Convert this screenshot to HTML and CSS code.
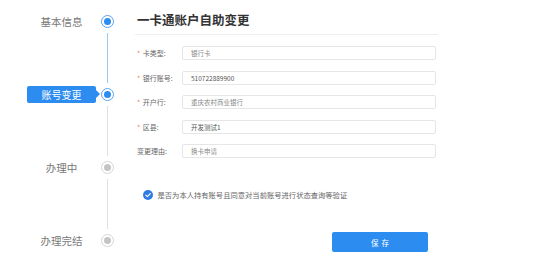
FILE: index.html
```html
<!DOCTYPE html>
<html lang="zh-CN">
<head>
    <meta charset="utf-8">
    <title>一卡通账户自助变更</title>
    <link rel="stylesheet" href="styles.css">
</head>
<body>

<div class="page">
    <div class="steps">
        <div class="step done">
            <span class="step-name">基本信息</span>
            <span class="arrow"></span>
            <span class="dot"></span>
        </div>
        <div class="link active"><span></span></div>
        <div class="step current">
            <span class="step-name">账号变更</span>
            <span class="arrow"></span>
            <span class="dot"></span>
        </div>
        <div class="link"><span></span></div>
        <div class="step">
            <span class="step-name">办理中</span>
            <span class="arrow"></span>
            <span class="dot"></span>
        </div>
        <div class="link"><span></span></div>
        <div class="step">
            <span class="step-name">办理完结</span>
            <span class="arrow"></span>
            <span class="dot"></span>
        </div>
    </div>

    <div class="form">
        <h1>一卡通账户自助变更</h1>

        <div class="fields">
            <div class="field">
                <label><span class="req">*</span>卡类型:</label>
                <input type="text" class="light" value="银行卡" readonly>
            </div>
            <div class="field">
                <label><span class="req">*</span>银行账号:</label>
                <input type="text" value="510722889900" readonly>
            </div>
            <div class="field">
                <label><span class="req">*</span>开户行:</label>
                <input type="text" class="light" value="重庆农村商业银行" readonly>
            </div>
            <div class="field">
                <label><span class="req">*</span>区县:</label>
                <input type="text" value="开发测试1" readonly>
            </div>
            <div class="field">
                <label>变更理由:</label>
                <input type="text" class="light" value="换卡申请" readonly>
            </div>
        </div>

        <div class="agree">
            <svg class="check" width="10" height="10" viewBox="0 0 10 10">
                <circle cx="5" cy="5" r="5" fill="#2d7be5"/>
                <path d="M2.8 5.1 L4.4 6.6 L7.3 3.6" fill="none" stroke="#fff" stroke-width="1.2" stroke-linecap="round" stroke-linejoin="round"/>
            </svg>
            <span>是否为本人持有账号且同意对当前账号进行状态查询等验证</span>
        </div>

        <button type="button" class="save">保存</button>
    </div>
</div>

</body>
</html>
```

FILE: styles.css
```css
body {
  margin: 0;
  background: #fff;
  font-family: "Noto Sans CJK SC", "Noto Sans", sans-serif;
  color: #666;
}
.page {
  display: flex;
  align-items: flex-start;
}

/* left steps */
.steps {
  display: flex;
  flex-direction: column;
  padding: 12.5px 0 0 27px;
  width: 87px;
}
.step {
  display: flex;
  align-items: center;
  height: 17px;
}
.step-name {
  width: 69px;
  height: 17px;
  line-height: 17px;
  text-align: center;
  font-size: 10.5px;
  color: #777;
  border-radius: 2px;
}
.arrow {
  width: 0;
  height: 0;
  border-top: 4px solid transparent;
  border-bottom: 4px solid transparent;
  border-left: 4px solid transparent;
  margin-right: 1px;
}
.dot {
  box-sizing: border-box;
  width: 13px;
  height: 13px;
  border-radius: 50%;
  border: 1px solid #d6d6d6;
  display: flex;
  align-items: center;
  justify-content: center;
}
.dot::before {
  content: "";
  width: 7px;
  height: 7px;
  border-radius: 50%;
  background: #c4c4c4;
}
.done .dot,
.current .dot {
  border-color: #5aa4f0;
}
.done .dot::before,
.current .dot::before {
  background: #2d8cf0;
}
.current .step-name {
  background: #2d8cf0;
  color: #fff;
  font-size: 10px;
}
.current .arrow {
  border-left-color: #2d8cf0;
}
.link {
  height: 56px;
  padding: 3.5px 0 2.5px 80px;
  box-sizing: border-box;
}
.link span {
  display: block;
  width: 1px;
  height: 100%;
  background: #e0e0e0;
}
.link.active span {
  background: #9ccaf3;
}

/* right form */
.form {
  margin-left: 21px;
  width: 303px;
}
h1 {
  margin: 0;
  padding: 11px 0 6px 2px;
  font-size: 12.5px;
  line-height: 17px;
  font-weight: bold;
  color: #333;
  border-bottom: 1px solid #eee;
}
.fields {
  display: flex;
  flex-direction: column;
  gap: 10.5px;
  margin-top: 11px;
}
.field {
  display: flex;
  align-items: center;
  height: 14px;
}
.field label {
  width: 47px;
  padding-left: 2px;
  box-sizing: border-box;
  font-size: 7px;
  color: #666;
}
.req {
  color: #f07c6c;
  margin-right: 2.5px;
}
.field input {
  box-sizing: border-box;
  width: 254px;
  height: 14px;
  margin: 0;
  padding: 0 8px;
  border: 1px solid #e6e6e6;
  border-radius: 2px;
  font-family: "Noto Sans CJK SC", "Noto Sans", sans-serif;
  font-size: 6.5px;
  color: #555;
  outline: none;
  background: #fff;
}
.field input.light {
  color: #888;
}
.agree {
  display: flex;
  align-items: center;
  gap: 5px;
  height: 10px;
  margin: 32px 0 0 7.5px;
  font-size: 7.3px;
  color: #666;
}
.check {
  flex: none;
}
.save {
  display: block;
  width: 96px;
  height: 20px;
  margin: 32px 0 0 197px;
  padding: 0;
  border: none;
  border-radius: 2px;
  background: #2d8cf0;
  color: #fff;
  font-family: "Noto Sans CJK SC", "Noto Sans", sans-serif;
  font-size: 7.5px;
  letter-spacing: 3px;
  text-indent: 3px;
}
```
